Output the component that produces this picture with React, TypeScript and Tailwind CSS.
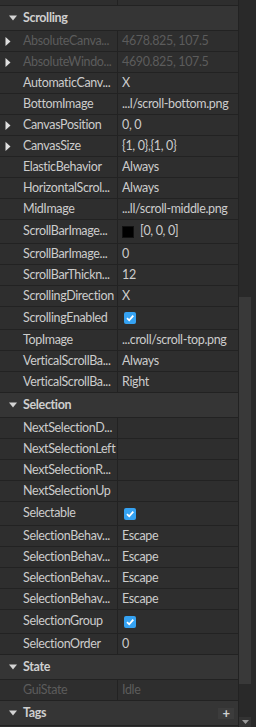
import React from "react";

type Row =
  | { kind: "header"; label: string; plus?: boolean }
  | {
      kind: "prop";
      name: string;
      value?: string;
      disabled?: boolean;
      expand?: boolean;
      check?: boolean;
      swatch?: boolean;
      h?: string;
    };

const rows: Row[] = [
  { kind: "header", label: "Scrolling" },
  { kind: "prop", name: "AbsoluteCanva...", value: "4678.825, 107.5", disabled: true, expand: true },
  { kind: "prop", name: "AbsoluteWindo...", value: "4690.825, 107.5", disabled: true, expand: true },
  { kind: "prop", name: "AutomaticCanv...", value: "X" },
  { kind: "prop", name: "BottomImage", value: "...l/scroll-bottom.png" },
  { kind: "prop", name: "CanvasPosition", value: "0, 0", expand: true },
  { kind: "prop", name: "CanvasSize", value: "{1, 0},{1, 0}", expand: true },
  { kind: "prop", name: "ElasticBehavior", value: "Always" },
  { kind: "prop", name: "HorizontalScrol...", value: "Always" },
  { kind: "prop", name: "MidImage", value: "...ll/scroll-middle.png" },
  { kind: "prop", name: "ScrollBarImage...", value: "[0, 0, 0]", swatch: true, h: "h-[24px]" },
  { kind: "prop", name: "ScrollBarImage...", value: "0" },
  { kind: "prop", name: "ScrollBarThickn...", value: "12" },
  { kind: "prop", name: "ScrollingDirection", value: "X" },
  { kind: "prop", name: "ScrollingEnabled", check: true, h: "h-[23px]" },
  { kind: "prop", name: "TopImage", value: "...croll/scroll-top.png" },
  { kind: "prop", name: "VerticalScrollBa...", value: "Always" },
  { kind: "prop", name: "VerticalScrollBa...", value: "Right" },
  { kind: "header", label: "Selection" },
  { kind: "prop", name: "NextSelectionD..." },
  { kind: "prop", name: "NextSelectionLeft" },
  { kind: "prop", name: "NextSelectionR..." },
  { kind: "prop", name: "NextSelectionUp" },
  { kind: "prop", name: "Selectable", check: true, h: "h-[24px]" },
  { kind: "prop", name: "SelectionBehav...", value: "Escape" },
  { kind: "prop", name: "SelectionBehav...", value: "Escape" },
  { kind: "prop", name: "SelectionBehav...", value: "Escape" },
  { kind: "prop", name: "SelectionBehav...", value: "Escape" },
  { kind: "prop", name: "SelectionGroup", check: true, h: "h-[24px]" },
  { kind: "prop", name: "SelectionOrder", value: "0" },
  { kind: "header", label: "State" },
  { kind: "prop", name: "GuiState", value: "Idle", disabled: true },
  { kind: "header", label: "Tags", plus: true },
];

function DownTri() {
  return (
    <svg width="8" height="6" viewBox="0 0 8 6" className="shrink-0">
      <path d="M0 0.5 H8 L4 5.5 Z" fill="#d4d4d4" />
    </svg>
  );
}

function RightTri() {
  return (
    <svg width="6" height="9" viewBox="0 0 6 9" className="shrink-0">
      <path d="M0.5 0 V9 L5.5 4.5 Z" fill="#e0e0e0" />
    </svg>
  );
}

function Check() {
  return (
    <div className="w-[12px] h-[12px] rounded-[2px] bg-[#35a2f2] flex items-center justify-center">
      <svg width="10" height="10" viewBox="0 0 10 10">
        <path d="M2 5.2 L4.2 7.3 L8.3 2.6" stroke="#fff" strokeWidth="1.8" fill="none" />
      </svg>
    </div>
  );
}

function Header({ label, plus }: { label: string; plus?: boolean }) {
  return (
    <div className="h-[25px] shrink-0 bg-[#353535] border-b border-[#222] flex items-center">
      <div className="w-[23px] shrink-0 flex justify-center pl-[3px]">
        <DownTri />
      </div>
      <span className="font-bold text-[#cfcfcf]">{label}</span>
      {plus && (
        <div className="ml-auto mr-[4px] w-[16px] h-[11px] bg-[#3c3c3c] flex items-center justify-center text-[#d0d0d0] text-[13px] leading-none font-bold">
          +
        </div>
      )}
    </div>
  );
}

function Prop({ r }: { r: Extract<Row, { kind: "prop" }> }) {
  const color = r.disabled ? "text-[#5c5c5c]" : "text-[#cccccc]";
  return (
    <div className={`${r.h ?? "h-[21px]"} shrink-0 bg-[#2e2e2e] border-b border-[#222] flex`}>
      <div className="w-[118px] shrink-0 border-r border-[#222] flex items-center overflow-hidden">
        <div className="w-[23px] shrink-0 flex justify-center pr-[8px] pl-[1px]">
          {r.expand && <RightTri />}
        </div>
        <span className={`${color} whitespace-nowrap`}>{r.name}</span>
      </div>
      <div className="flex-1 flex items-center pl-[4px] gap-[6px] whitespace-nowrap overflow-hidden">
        {r.check && (
          <div className="pl-[2px]">
            <Check />
          </div>
        )}
        {r.swatch && <div className="w-[12px] h-[12px] shrink-0 bg-black border border-[#111]" />}
        {r.value && <span className={color}>{r.value}</span>}
      </div>
    </div>
  );
}

export default function App() {
  return (
    <div
      className="w-[256px] h-[727px] overflow-hidden flex bg-[#2e2e2e] text-[12.5px] tracking-[-0.35px] leading-none"
      style={{ fontFamily: "Lato, 'Liberation Sans', sans-serif" }}
    >
      <div className="w-[238px] shrink-0 flex flex-col">
        <div className="h-[6px] shrink-0 bg-[#2e2e2e] border-b border-[#222] flex">
          <div className="w-[118px] border-r border-[#222]" />
        </div>
        {rows.map((r, i) =>
          r.kind === "header" ? (
            <Header key={i} label={r.label} plus={r.plus} />
          ) : (
            <Prop key={i} r={r} />
          )
        )}
      </div>
      <div className="w-[18px] shrink-0 bg-[#292929] border-l border-[#222] flex flex-col">
        <div className="h-[297px] shrink-0" />
        <div className="h-[387px] w-[12px] shrink-0 bg-[#393939]" />
        <div className="flex-1" />
        <div className="h-[10px] w-[12px] bg-[#333] flex items-center justify-center">
          <svg width="7" height="4" viewBox="0 0 7 4">
            <path d="M0 0 H7 L3.5 4 Z" fill="#9a9a9a" />
          </svg>
        </div>
      </div>
    </div>
  );
}
